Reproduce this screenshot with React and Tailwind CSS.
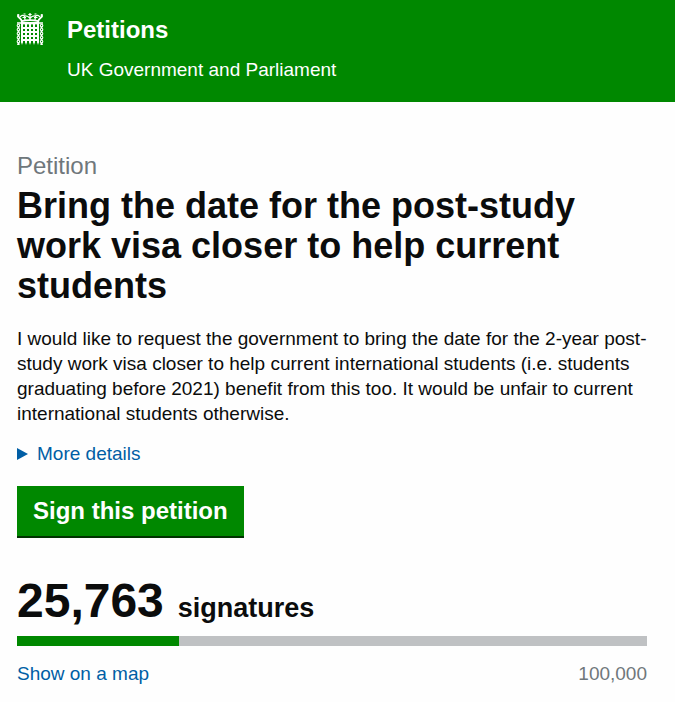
const petition = {
  title: 'Bring the date for the post-study work visa closer to help current students',
  signatures: 25763,
  target: 100000
}

function Portcullis() {
  const chain = [13.5, 17.5, 21.5, 25.5, 29.5]

  return (
    <svg viewBox="0 0 28 34" className="h-[34px] w-7 shrink-0" fill="none" stroke="white" aria-hidden="true">
      {/* crown */}
      <path d="M6 10 C5.5 7.5 4 6 1.5 4 M22 10 C22.5 7.5 24 6 26.5 4" strokeWidth="1.8" />
      <path d="M5.5 9.2 Q14 7 22.5 9.2" strokeWidth="1.8" />
      <path d="M4 5 Q6 2.2 8.5 4 Q12 3.5 14 6.5 Q16 3.5 19.5 4 Q22 2.2 24 5 M8.5 4 L9 8 M19.5 4 L19 8 M14 1 V8" strokeWidth="1.3" />
      <path d="M12.3 2.5 H15.7 M6.5 5.5 H10 M18 5.5 H21.5 M1 3.2 H3.4 M24.6 3.2 H27 M2.2 2 V4.5 M25.8 2 V4.5 M7.5 2 H9.5 M18.5 2 H20.5" strokeWidth="1.2" />
      {/* gate */}
      <path d="M5 11.2 H23" strokeWidth="2.4" />
      <path d="M5 16 H23 M5 20 H23 M5 24 H23 M5 28 H23" strokeWidth="1.9" />
      <path d="M6 11 V30.5 M10 11 V30.5 M14 11 V30.5 M18 11 V30.5 M22 11 V30.5" strokeWidth="2" />
      <path d="M5 30 H7 L6 33 Z M9 30 H11 L10 33 Z M13 30 H15 L14 33 Z M17 30 H19 L18 33 Z M21 30 H23 L22 33 Z" fill="white" stroke="none" />
      {/* chains */}
      <path d="M1 11 H5 M23 11 H27" strokeWidth="1.4" />
      {chain.map((y) => (
        <g key={y} strokeWidth="1.1">
          <ellipse cx="2.4" cy={y} rx="1.2" ry="1.3" />
          <ellipse cx="25.6" cy={y} rx="1.2" ry="1.3" />
          <path d={`M1.6 ${y + 2} H3.4 M24.6 ${y + 2} H26.4`} />
        </g>
      ))}
      <path d="M1.2 32.3 H3.6 M24.4 32.3 H26.8" strokeWidth="1.2" />
    </svg>
  )
}

function Header() {
  return (
    <header className="flex gap-[23px] bg-[#008800] px-4 pt-3 pb-5 text-white">
      <Portcullis />
      <div className="pt-[3px]">
        <a href="#petitions" className="block text-[24px] leading-[30px] font-bold">Petitions</a>
        <p className="pt-3 text-[19px] leading-[25px]">UK Government and Parliament</p>
      </div>
    </header>
  )
}

function Progress({ value, max }) {
  const percent = Math.min(100, (value / max) * 100)

  return (
    <div role="progressbar" aria-label="Signatures" aria-valuenow={value} aria-valuemin={0} aria-valuemax={max} className="h-[10px] bg-[#bfc1c3]">
      <div className="h-full bg-[#008800]" style={{ width: `${percent}%` }} />
    </div>
  )
}

export default function App() {
  return (
    <div className="min-h-screen bg-[#fefefe] font-['Liberation_Sans',Arial,sans-serif] text-[19px] leading-[25px] text-[#0b0c0c]">
      <Header />

      <main className="pt-[49px] pr-7 pb-4 pl-[17px]">
        <h1 className="text-[36px] leading-[40px] font-bold">
          <span className="block pb-[5px] text-[24px] leading-[30px] font-normal text-[#6f777b]">Petition</span>
          {petition.title}
        </h1>

        <p className="pt-5">
          I would like to request the government to bring the date for the 2-year post-study work visa closer to help
          current international students (i.e. students graduating before 2021) benefit from this too. It would be
          unfair to current international students otherwise.
        </p>

        <button type="button" aria-expanded="false" className="mt-[15px] flex cursor-pointer items-center gap-[9px] text-[#005ea5]">
          <svg viewBox="0 0 11 12" className="h-3 w-[11px]" fill="currentColor" aria-hidden="true">
            <path d="M0 0 L11 6 L0 12 Z" />
          </svg>
          More details
        </button>

        <button type="button" className="mt-5 block cursor-pointer border-b-2 border-[#003300] bg-[#008800] px-4 py-[10px] text-[24px] leading-[30px] font-bold text-white">
          Sign this petition
        </button>

        <p className="flex items-baseline gap-[14px] pt-[38px] pb-[10px] font-bold">
          <span className="text-[48px] leading-[50px]">{petition.signatures.toLocaleString('en-GB')}</span>
          <span className="text-[27px] leading-[30px]">signatures</span>
        </p>

        <Progress value={petition.signatures} max={petition.target} />

        <div className="flex justify-between pt-[15px]">
          <a href="#map" className="text-[#005ea5]">Show on a map</a>
          <span className="text-[#6f777b]">{petition.target.toLocaleString('en-GB')}</span>
        </div>
      </main>
    </div>
  )
}
